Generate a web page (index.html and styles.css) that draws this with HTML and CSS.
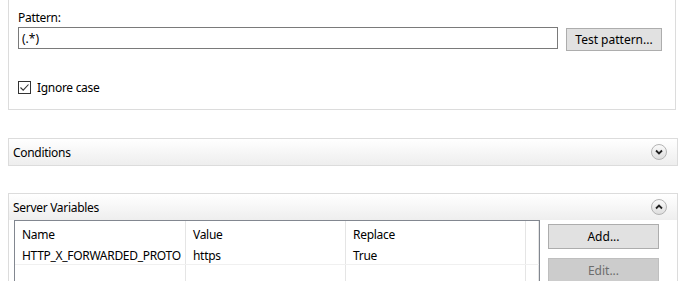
FILE: index.html
```html
<!DOCTYPE html>
<html lang="en">
<head>
  <meta charset="UTF-8">
  <title>Edit Inbound Rule</title>
  <link rel="stylesheet" href="styles.css">
</head>
<body>

<div class="panel panel-open">
  <div class="field-label">Pattern:</div>
  <div class="pattern-row">
    <input class="textbox" type="text" value="(.*)">
    <button class="btn btn-test">Test pattern...</button>
  </div>
  <label class="check-row">
    <span class="checkbox">
      <svg width="11" height="11" viewBox="0 0 11 11"><path d="M1.5 5.5 L4.2 8.2 L9.5 2.5" fill="none" stroke="#333" stroke-width="1.1"/></svg>
    </span>
    Ignore case
  </label>
</div>

<div class="panel panel-collapsed">
  <div class="panel-head">
    <span>Conditions</span>
    <span class="chevron">
      <svg width="10" height="8" viewBox="0 0 10 8"><path d="M2 2.5 L5 5.5 L8 2.5" fill="none" stroke="#222" stroke-width="1.8"/></svg>
    </span>
  </div>
</div>

<div class="panel panel-vars">
  <div class="panel-head">
    <span>Server Variables</span>
    <span class="chevron">
      <svg width="10" height="8" viewBox="0 0 10 8"><path d="M2 5.5 L5 2.5 L8 5.5" fill="none" stroke="#222" stroke-width="1.8"/></svg>
    </span>
  </div>
  <div class="vars-body">
    <div class="listview">
      <div class="lv-row lv-header">
        <div class="lv-cell">Name</div>
        <div class="lv-cell">Value</div>
        <div class="lv-cell">Replace</div>
        <div class="lv-cell"></div>
      </div>
      <div class="lv-row">
        <div class="lv-cell">HTTP_X_FORWARDED_PROTO</div>
        <div class="lv-cell">https</div>
        <div class="lv-cell">True</div>
        <div class="lv-cell"></div>
      </div>
      <div class="lv-row">
        <div class="lv-cell"></div>
        <div class="lv-cell"></div>
        <div class="lv-cell"></div>
        <div class="lv-cell"></div>
      </div>
    </div>
    <div class="side-buttons">
      <button class="btn btn-side">Add...</button>
      <button class="btn btn-side" disabled>Edit...</button>
    </div>
  </div>
</div>

</body>
</html>
```

FILE: styles.css
```css
body {
  margin: 0;
  background-color: #fff;
  color: #000;
  font-family: "Noto Sans", "Open Sans", sans-serif;
  font-size: 12px;
  letter-spacing: -0.3px;
  height: 281px;
  overflow: hidden;
}

/* Panels */
.panel {
  margin-left: 8px;
  width: 668px;
  border: 1px solid #dcdcdc;
  background-color: #fff;
}

.panel-open {
  border-top: none;
  height: 110px;
  padding-left: 9px;
  box-sizing: border-box;
}

.panel-collapsed {
  margin-top: 28px;
}

.panel-vars {
  margin-top: 27px;
  border-bottom: none;
  height: 100px;
}

.panel-head {
  display: flex;
  align-items: center;
  justify-content: space-between;
  height: 26px;
  padding: 0 10px 0 4px;
  background: linear-gradient(#ffffff, #eeeeee);
}

.chevron {
  display: flex;
  align-items: center;
  justify-content: center;
  width: 14px;
  height: 14px;
  border-radius: 50%;
  border: 1px solid #b4b4b4;
  background: linear-gradient(#fafafa, #dedede);
}

/* Pattern section */
.field-label {
  padding-top: 9px;
  line-height: 17px;
  height: 18px;
}

.pattern-row {
  display: flex;
  align-items: flex-start;
  gap: 8px;
}

.textbox {
  width: 540px;
  height: 22px;
  box-sizing: border-box;
  border: 1px solid #7a7a7a;
  padding: 0 3px;
  font: inherit;
  margin: 0;
  outline: none;
}

.btn {
  font: inherit;
  color: #000;
  background-color: #e1e1e1;
  border: 1px solid #adadad;
  margin: 0;
  padding: 0;
  box-sizing: border-box;
}

.btn-test {
  width: 96px;
  height: 23px;
  margin-top: 1px;
}

.check-row {
  display: flex;
  align-items: center;
  gap: 6px;
  margin-top: 29px;
  height: 14px;
}

.checkbox {
  display: flex;
  align-items: center;
  justify-content: center;
  width: 13px;
  height: 13px;
  box-sizing: border-box;
  border: 1px solid #333;
  background-color: #fff;
}

/* Server variables */
.vars-body {
  display: flex;
  gap: 8px;
  padding-left: 5px;
}

.listview {
  width: 526px;
  height: 70px;
  box-sizing: border-box;
  border: 1px solid #828790;
  border-bottom: none;
}

.lv-row {
  display: grid;
  grid-template-columns: 171px 160px 180px 1fr;
  height: 18px;
  border-bottom: 1px solid #f0f0f0;
}

.lv-header {
  height: 25px;
  border-bottom: none;
  align-items: center;
}

.lv-cell {
  padding-left: 7px;
  line-height: 19px;
  border-right: 1px solid #e5e5e5;
  white-space: nowrap;
  overflow: hidden;
}

.lv-header .lv-cell {
  height: 25px;
  line-height: 27px;
}

.side-buttons {
  display: flex;
  flex-direction: column;
  gap: 9px;
  padding-top: 4px;
}

.btn-side {
  width: 111px;
  height: 25px;
}

.btn-side:disabled {
  background-color: #cccccc;
  border-color: #bfbfbf;
  color: #6d6d6d;
}
```
